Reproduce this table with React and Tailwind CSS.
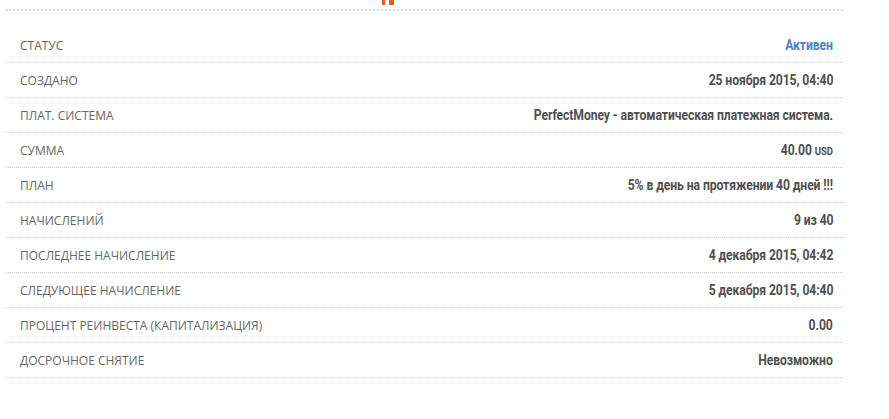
export default function App() {
  const rows = [
    ["СТАТУС", <span className="text-[#4a84c2]">Активен</span>],
    ["СОЗДАНО", "25 ноября 2015, 04:40"],
    ["ПЛАТ. СИСТЕМА", "PerfectMoney - автоматическая платежная система."],
    ["СУММА", <span>40.00 <span className="text-[11px]">USD</span></span>],
    ["ПЛАН", "5% в день на протяжении 40 дней !!!"],
    ["НАЧИСЛЕНИЙ", "9 из 40"],
    ["ПОСЛЕДНЕЕ НАЧИСЛЕНИЕ", "4 декабря 2015, 04:42"],
    ["СЛЕДУЮЩЕЕ НАЧИСЛЕНИЕ", "5 декабря 2015, 04:40"],
    ["ПРОЦЕНТ РЕИНВЕСТА (КАПИТАЛИЗАЦИЯ)", "0.00"],
    ["ДОСРОЧНОЕ СНЯТИЕ", "Невозможно"],
  ];
  return (
    <div className="w-[889px] h-[419px] bg-white overflow-hidden">
      <div className="ml-[6px] w-[837px]">
        <div className="flex h-[9px] justify-center">
          <div className="flex gap-[4px] h-[5px] ml-[-74px]">
            <div className="w-[3px] h-[5px] bg-[#e95a1e]" />
            <div className="w-[5px] h-[5px] bg-[#e95a1e]" />
          </div>
        </div>
        <div className="h-[2px] border-t-2 border-dotted border-[#d8d8d8]" />
        <div className="h-[17px]" />
        {rows.map(([label, value], i) => (
          <div
            key={i}
            className="flex items-center justify-between h-[35px] pl-[14px] pr-[10px] border-b border-dotted border-[#c8c8c8]"
          >
            <span
              className="text-[12px] text-[#666] pt-[1px]"
              style={{ fontFamily: '"Open Sans", sans-serif' }}
            >
              {label}
            </span>
            <span
              className="inline-block whitespace-nowrap origin-right scale-x-[0.87] text-[14px] font-bold text-[#505050] pt-[1px] tracking-[-0.1px]"
              style={{ fontFamily: 'Roboto, sans-serif' }}
            >
              {value}
            </span>
          </div>
        ))}
      </div>
    </div>
  );
}
